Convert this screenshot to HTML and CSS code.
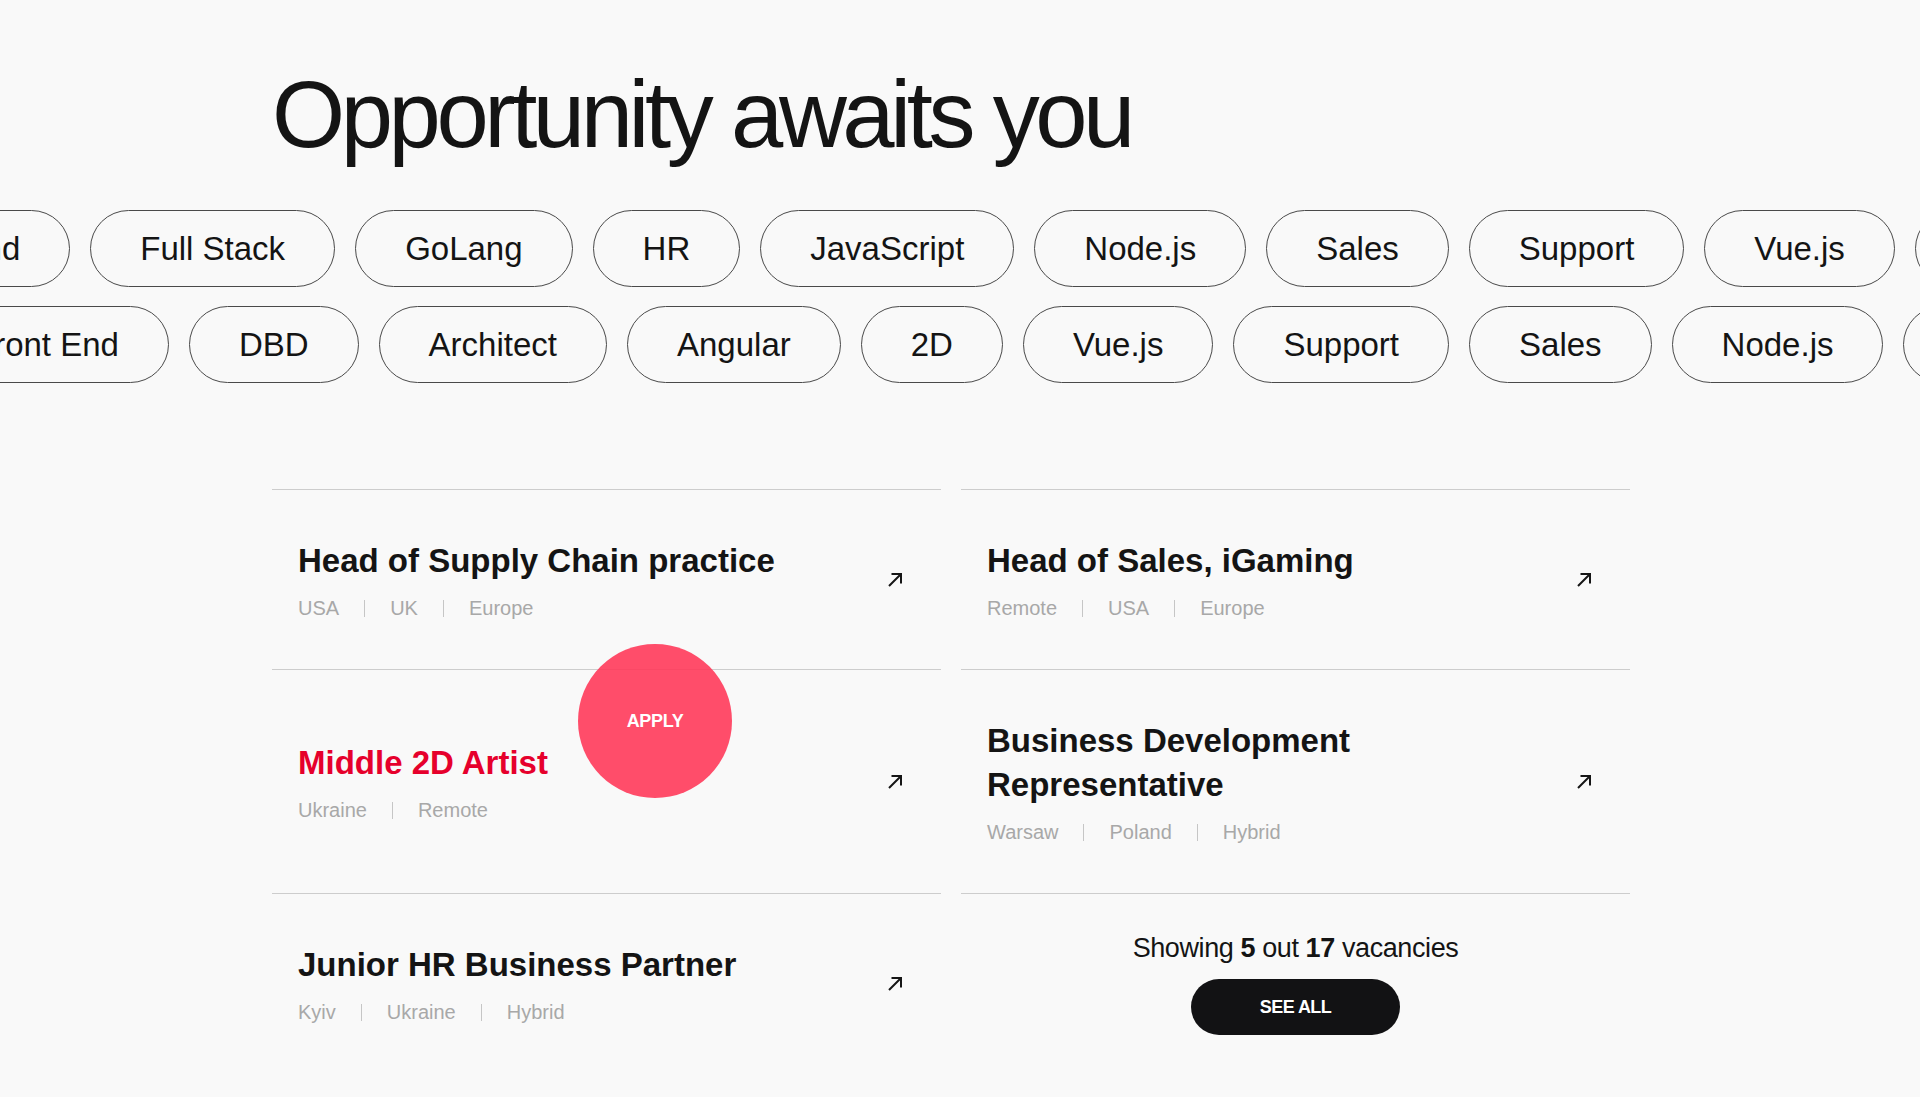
FILE: index.html
```html
<!DOCTYPE html>
<html>
  <head>
    <meta charset="utf-8">
    <title>Careers</title>
    <link rel="stylesheet" href="styles.css">
  </head>
  <body>
    <section class="careers">
      <h1 class="careers-title">Opportunity awaits you</h1>

      <div class="tags">
        <div class="tags-track tags-track--first">
          <span class="tag">Back End</span>
          <span class="tag">Full Stack</span>
          <span class="tag">GoLang</span>
          <span class="tag">HR</span>
          <span class="tag">JavaScript</span>
          <span class="tag">Node.js</span>
          <span class="tag">Sales</span>
          <span class="tag">Support</span>
          <span class="tag">Vue.js</span>
          <span class="tag">Angular</span>
        </div>
        <div class="tags-track tags-track--second">
          <span class="tag">Front End</span>
          <span class="tag">DBD</span>
          <span class="tag">Architect</span>
          <span class="tag">Angular</span>
          <span class="tag">2D</span>
          <span class="tag">Vue.js</span>
          <span class="tag">Support</span>
          <span class="tag">Sales</span>
          <span class="tag">Node.js</span>
          <span class="tag">JavaScript</span>
        </div>
      </div>

      <div class="jobs">
        <a class="job" href="#">
          <div class="job-info">
            <h3 class="job-title">Head of Supply Chain practice</h3>
            <p class="job-meta"><span>USA</span><i class="sep"></i><span>UK</span><i class="sep"></i><span>Europe</span></p>
          </div>
          <svg class="job-arrow" width="16" height="16" viewBox="0 0 16 16"><path d="M2 14 L14 2 M4.5 2 H14 V11.5" /></svg>
        </a>

        <a class="job" href="#">
          <div class="job-info">
            <h3 class="job-title">Head of Sales, iGaming</h3>
            <p class="job-meta"><span>Remote</span><i class="sep"></i><span>USA</span><i class="sep"></i><span>Europe</span></p>
          </div>
          <svg class="job-arrow" width="16" height="16" viewBox="0 0 16 16"><path d="M2 14 L14 2 M4.5 2 H14 V11.5" /></svg>
        </a>

        <a class="job job--active" href="#">
          <div class="job-info">
            <h3 class="job-title">Middle 2D Artist</h3>
            <p class="job-meta"><span>Ukraine</span><i class="sep"></i><span>Remote</span></p>
          </div>
          <svg class="job-arrow" width="16" height="16" viewBox="0 0 16 16"><path d="M2 14 L14 2 M4.5 2 H14 V11.5" /></svg>
          <span class="apply-cursor">APPLY</span>
        </a>

        <a class="job" href="#">
          <div class="job-info">
            <h3 class="job-title">Business Development Representative</h3>
            <p class="job-meta"><span>Warsaw</span><i class="sep"></i><span>Poland</span><i class="sep"></i><span>Hybrid</span></p>
          </div>
          <svg class="job-arrow" width="16" height="16" viewBox="0 0 16 16"><path d="M2 14 L14 2 M4.5 2 H14 V11.5" /></svg>
        </a>

        <a class="job" href="#">
          <div class="job-info">
            <h3 class="job-title">Junior HR Business Partner</h3>
            <p class="job-meta"><span>Kyiv</span><i class="sep"></i><span>Ukraine</span><i class="sep"></i><span>Hybrid</span></p>
          </div>
          <svg class="job-arrow" width="16" height="16" viewBox="0 0 16 16"><path d="M2 14 L14 2 M4.5 2 H14 V11.5" /></svg>
        </a>

        <div class="jobs-more">
          <p class="jobs-count">Showing <b>5</b> out <b>17</b> vacancies</p>
          <button class="btn-all">SEE ALL</button>
        </div>
      </div>
    </section>
  </body>
</html>
```

FILE: styles.css
```css
body {
  margin: 0;
  background-color: #f9f9f9;
  color: #141414;
  font-family: "Liberation Sans", Arial, sans-serif;
  overflow: hidden;
}

.careers {
  padding-top: 63px;
}

.careers-title {
  margin: 0 0 44px 272px;
  font-size: 94px;
  font-weight: 400;
  line-height: 1.1;
  letter-spacing: -0.047em;
}

/* tag marquee */
.tags {
  display: flex;
  flex-direction: column;
  gap: 19px;
  overflow: hidden;
}

.tags-track {
  display: flex;
  gap: 20px;
  width: max-content;
}

.tags-track--first {
  margin-left: -171px;
}

.tags-track--second {
  margin-left: -76px;
}

.tag {
  display: block;
  padding: 19px 49px;
  border: 1px solid #4a4a4a;
  border-radius: 40px;
  font-size: 33px;
  line-height: 37px;
  white-space: nowrap;
}

/* vacancies */
.jobs {
  display: grid;
  grid-template-columns: 669px 669px;
  column-gap: 20px;
  margin: 106px 0 0 272px;
}

.job {
  position: relative;
  display: flex;
  align-items: center;
  padding: 49px 38px 49px 26px;
  border-top: 1px solid #cdcdcd;
  color: inherit;
  text-decoration: none;
}

.job-info {
  flex: 1;
  max-width: 560px;
}

.job-title {
  margin: 0;
  font-size: 33px;
  font-weight: 700;
  line-height: 44px;
}

.job--active .job-title {
  color: #e6002c;
}

.job-meta {
  margin: 13px 0 0;
  font-size: 20px;
  line-height: 24px;
  color: #a8a8a8;
}

.sep {
  display: inline-block;
  width: 1px;
  height: 17px;
  margin: 0 25px;
  background-color: #c6c6c6;
  vertical-align: -2px;
}

.job-arrow {
  margin-left: auto;
  fill: none;
  stroke: #161616;
  stroke-width: 2;
}

.apply-cursor {
  position: absolute;
  left: 306px;
  top: -26px;
  width: 154px;
  height: 154px;
  display: flex;
  align-items: center;
  justify-content: center;
  border-radius: 50%;
  background-color: rgba(255, 58, 90, 0.9);
  color: #fff;
  font-size: 18px;
  font-weight: 700;
  letter-spacing: -0.02em;
}

.jobs-more {
  display: flex;
  flex-direction: column;
  align-items: center;
  justify-content: center;
  border-top: 1px solid #cdcdcd;
}

.jobs-count {
  margin: 0 0 15px;
  font-size: 27px;
  line-height: 32px;
  letter-spacing: -0.015em;
}

.btn-all {
  width: 209px;
  height: 56px;
  border: none;
  border-radius: 28px;
  background-color: #121214;
  color: #fff;
  font-family: inherit;
  font-size: 18px;
  font-weight: 700;
  letter-spacing: -0.03em;
  cursor: pointer;
}
```
